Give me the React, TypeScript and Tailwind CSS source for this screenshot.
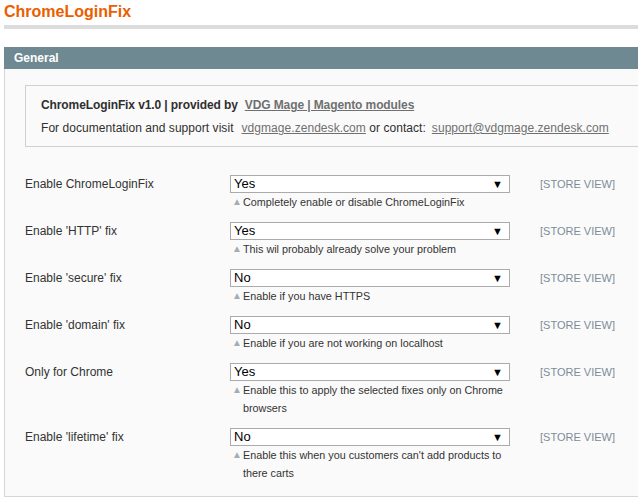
const rows = [
  { label: 'Enable ChromeLoginFix', value: 'Yes', hint: 'Completely enable or disable ChromeLoginFix' },
  { label: "Enable 'HTTP' fix", value: 'Yes', hint: 'This wil probably already solve your problem' },
  { label: "Enable 'secure' fix", value: 'No', hint: 'Enable if you have HTTPS' },
  { label: "Enable 'domain' fix", value: 'No', hint: 'Enable if you are not working on localhost' },
  { label: 'Only for Chrome', value: 'Yes', hint: 'Enable this to apply the selected fixes only on Chrome browsers' },
  { label: "Enable 'lifetime' fix", value: 'No', hint: "Enable this when you customers can't add products to there carts" },
]

export default function App() {
  return (
    <div className="w-[638px] h-[502px] overflow-hidden bg-white font-['Liberation_Sans',Arial,sans-serif]">
      <div className="w-[680px] pl-1">
        {/* titel */}
        <h1 className="h-[25px] pt-[3px] text-[16px] leading-[18px] font-bold text-[#eb5e00]">ChromeLoginFix</h1>
        <div className="h-1 bg-[#dcdcdc]" />

        <div className="mt-[18px]">
          <div className="h-[22px] bg-[#6f8992] pl-[10px] text-[12px] leading-[22px] font-bold text-white">General</div>
          <div className="border-l border-b border-[#d6d6d6] bg-[#fafafa] pt-[16px] pb-[14px]">
            {/* info blok */}
            <div className="ml-[20px] h-[62px] border border-[#d0d0d0] bg-[#fafafa] pl-[15px] pt-[7px] text-[12px] leading-[24px] text-[#2f2f2f]">
              <div className="font-bold tracking-[-0.1px]">
                ChromeLoginFix v1.0 | provided by
                <a className="ml-[7px] text-[#707070] underline">VDG Mage | Magento modules</a>
              </div>
              <div className="-mt-[1px] tracking-[0.05px]">
                For documentation and support visit
                <a className="ml-[8px] text-[#707070] underline">vdgmage.zendesk.com</a> or contact:
                <a className="ml-[6px] text-[#707070] underline">support@vdgmage.zendesk.com</a>
              </div>
            </div>

            <div className="mt-[28px] flex flex-col gap-[11px]">
              {rows.map((r) => (
                <div key={r.label} className="flex items-start">
                  <div className="w-[225px] pl-[20px] text-[12px] leading-[18px] text-[#333]">{r.label}</div>
                  <div className="w-[280px]">
                    <div className="flex h-[18px] items-center justify-between border border-[#ababab] bg-white pl-[3px] pr-[6px] text-[13px] text-black">
                      <span>{r.value}</span>
                      <span className="text-[11px]">▼</span>
                    </div>
                    <div className="flex text-[10.8px] leading-[18px] text-[#333]">
                      <span className="w-[13px] shrink-0 pl-[2px] text-[10px] text-[#a3adb3]">▲</span>
                      <span>{r.hint}</span>
                    </div>
                  </div>
                  <div className="ml-[30px] text-[11px] leading-[18px] text-[#7d8c99]">[STORE VIEW]</div>
                </div>
              ))}
            </div>
          </div>
        </div>
      </div>
    </div>
  )
}
